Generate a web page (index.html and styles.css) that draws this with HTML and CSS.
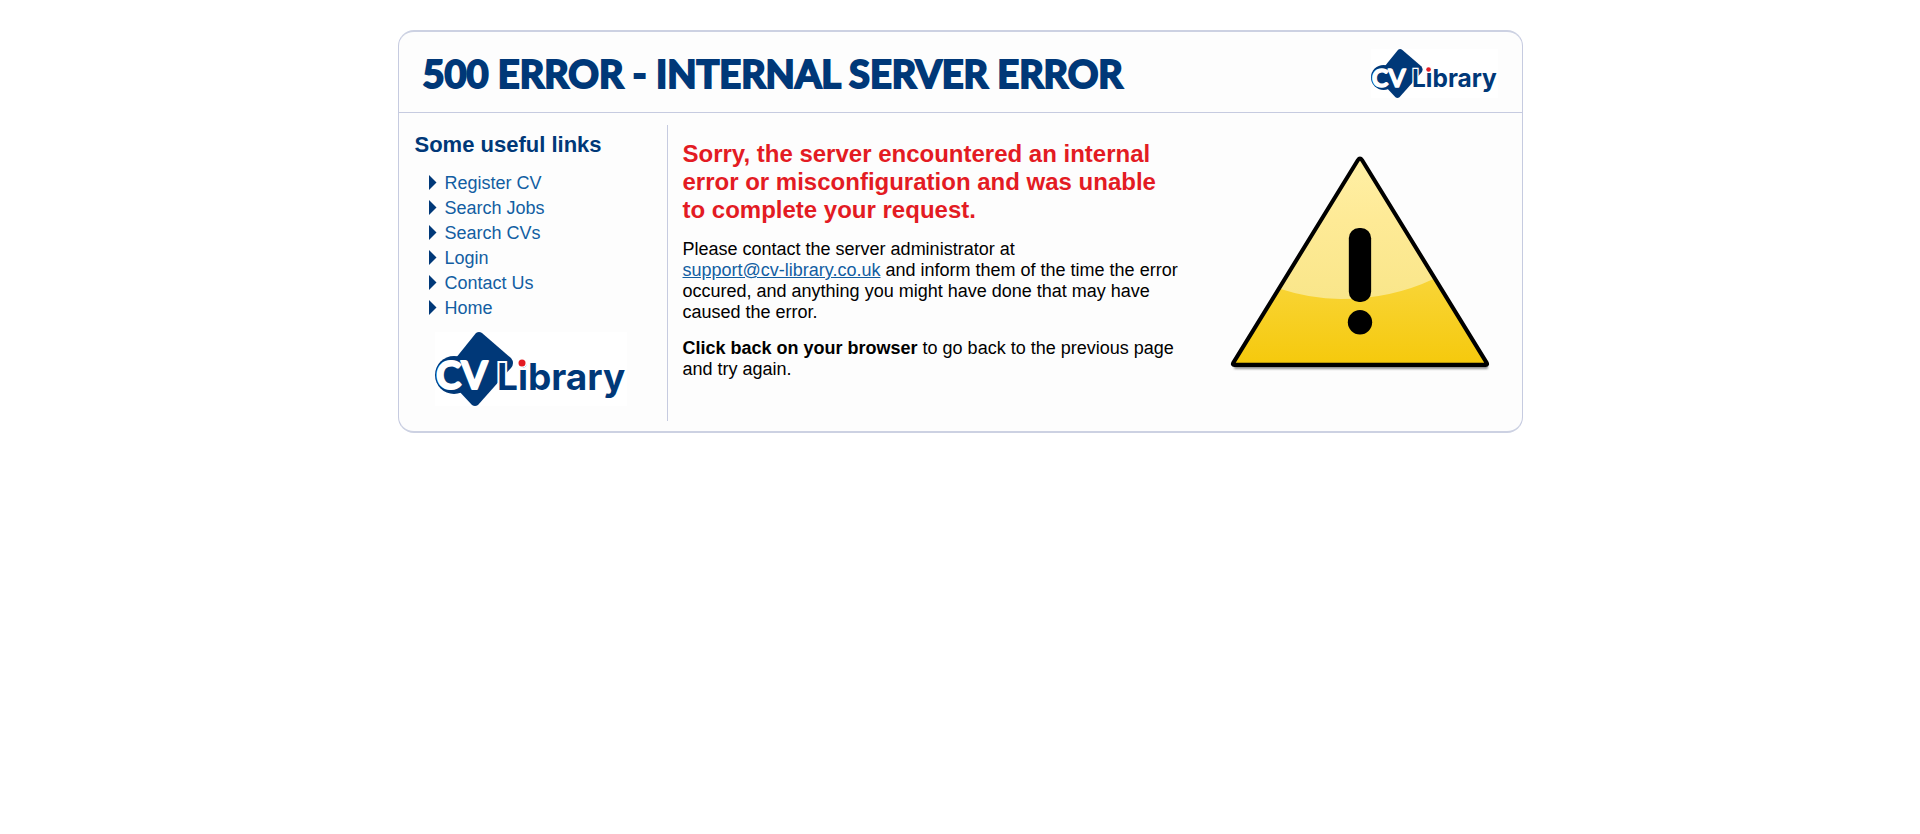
FILE: index.html
```html
<!DOCTYPE html>
<html lang="en">
<head>
<meta charset="utf-8">
<title>500 Error - Internal Server Error</title>
<link rel="stylesheet" href="styles.css">
</head>
<body>
<main class="card">
  <header class="card-header">
    <h1 class="title">500 ERROR - INTERNAL SERVER ERROR</h1>
    <svg class="logo-small" viewBox="0 0 192 74" role="img" aria-label="CV Library">
      <rect width="192" height="74" fill="#fff"/>
      <path d="M41 1Q44-1 47 1L76 26Q80 31 76 36L43 73Q40 75 37 73L8 42Z" fill="#003878"/>
      <circle cx="19" cy="43" r="19" fill="#003878"/>
      <text class="logo-cv" x="1" y="57">CV</text>
      <text class="logo-name" x="62" y="58">Library</text>
      <circle cx="87" cy="31" r="5" fill="#fff"/>
      <circle cx="87" cy="31" r="3.5" fill="#e31b23"/>
    </svg>
  </header>
  <div class="content">
    <nav class="sidebar">
      <h2 class="links-title">Some useful links</h2>
      <ul class="links">
        <li><a href="#">Register CV</a></li>
        <li><a href="#">Search Jobs</a></li>
        <li><a href="#">Search CVs</a></li>
        <li><a href="#">Login</a></li>
        <li><a href="#">Contact Us</a></li>
        <li><a href="#">Home</a></li>
      </ul>
      <svg class="logo-large" viewBox="0 0 192 74" role="img" aria-label="CV Library">
        <rect width="192" height="74" fill="#fff"/>
        <path d="M41 1Q44-1 47 1L76 26Q80 31 76 36L43 73Q40 75 37 73L8 42Z" fill="#003878"/>
        <circle cx="19" cy="43" r="19" fill="#003878"/>
        <text class="logo-cv" x="1" y="57">CV</text>
        <text class="logo-name" x="62" y="58">Library</text>
        <circle cx="87" cy="31" r="5" fill="#fff"/>
        <circle cx="87" cy="31" r="3.5" fill="#e31b23"/>
      </svg>
    </nav>
    <section class="message">
      <h2 class="message-title">Sorry, the server encountered an internal error or misconfiguration and was unable to complete your request.</h2>
      <p>Please contact the server administrator at <a class="email" href="mailto:support@cv-library.co.uk">support@cv-library.co.uk</a> and inform them of the time the error occured, and anything you might have done that may have caused the error.</p>
      <p><strong>Click back on your browser</strong> to go back to the previous page and try again.</p>
    </section>
    <svg class="warning" viewBox="0 0 260 216" role="img" aria-label="Warning">
      <defs>
        <linearGradient id="base" x1="0" y1="0" x2="0" y2="1"><stop offset="0" stop-color="#fbe06a"/><stop offset=".65" stop-color="#f8d330"/><stop offset="1" stop-color="#f5c90c"/></linearGradient>
        <linearGradient id="gloss" x1="0" y1="0" x2="0" y2="1"><stop offset="0" stop-color="#fff0a6"/><stop offset=".45" stop-color="#feea96"/><stop offset="1" stop-color="#f9e68a"/></linearGradient>
        <clipPath id="shape"><path d="M129 4 4 206H254Z"/></clipPath>
        <filter id="soft" x="-5%" y="-400%" width="110%" height="900%" filterUnits="objectBoundingBox"><feGaussianBlur stdDeviation="1.2"/></filter>
      </defs>
      <rect x="5" y="206" width="250" height="4" fill="#8a8a8a" filter="url(#soft)"/>
      <path d="M129 4 4 206H254Z" fill="url(#base)"/>
      <path d="M0 0H260V117L202 121Q160 141 110 141Q80 141 50 131L0 110Z" fill="url(#gloss)" clip-path="url(#shape)"/>
      <path d="M127 4Q129 1 131 4L254 204Q255 206 253 206H5Q3 206 4 204Z" fill="none" stroke="#000" stroke-width="4" stroke-linejoin="round"/>
      <rect x="118" y="71" width="22" height="73" rx="10"/>
      <circle cx="129" cy="164" r="12"/>
    </svg>
  </div>
</main>
</body>
</html>
```
FILE: styles.css
```css
* { box-sizing: border-box; }
body {
  margin: 0;
  padding: 30px 16px;
  background: #fff;
  color: #000;
  font: 18px/21px "Liberation Sans", Arial, sans-serif;
}
h1, h2, p, ul { margin: 0; padding: 0; }
a { color: #125ea2; }
.card {
  max-width: 1125px;
  margin: 0 auto;
  background: #fdfdfd;
  border: 1px solid #c6cbe0;
  border-top: 2px solid #ccd1e2;
  border-bottom: 2px solid #ccd1e2;
  border-radius: 16px;
}
.card-header {
  display: flex;
  justify-content: space-between;
  align-items: center;
  padding: 16px 24px 14px;
  border-bottom: 1px solid #c6cbe0;
}
.title {
  color: #003878;
  font: 700 38px/50px Lato, sans-serif;
  -webkit-text-stroke: 2px #003878;
}
.logo-small { width: 127px; height: 49px; }
.logo-cv {
  fill: #fff;
  stroke: #fff;
  stroke-width: 2;
  stroke-linejoin: round;
  font: 700 38px Lato, sans-serif;
}
.logo-name {
  fill: #003878;
  stroke: #fff;
  stroke-width: 4;
  paint-order: stroke;
  font: 700 37px Inter, sans-serif;
}
.content {
  display: grid;
  grid-template-columns: 269px minmax(0, 1fr) 293px;
  padding: 12px 0 10px;
}
.sidebar {
  min-height: 296px;
  padding: 7px 16px 12px;
  border-right: 1px solid #c6cbe0;
}
.links-title { color: #003878; font-size: 22px; line-height: 26px; }
.links { margin: 13px 0 11px 14px; list-style: none; }
.links li { display: flex; align-items: center; height: 25px; }
.links li::before {
  content: "";
  width: 8px;
  height: 16px;
  margin: 0 8px 2px 0;
  background: #003878;
  clip-path: polygon(0 0, 100% 50%, 0 100%);
}
.links a { text-decoration: none; }
.logo-large { display: block; width: 192px; height: 74px; margin-left: 20px; }
.message { padding: 15px 48px 0 15px; }
.message-title { color: #e31b23; font-size: 24px; line-height: 28px; }
.message p { margin-top: 15px; }
.email { white-space: nowrap; }
.warning { width: 264px; height: 219px; margin-top: 31px; }
```
